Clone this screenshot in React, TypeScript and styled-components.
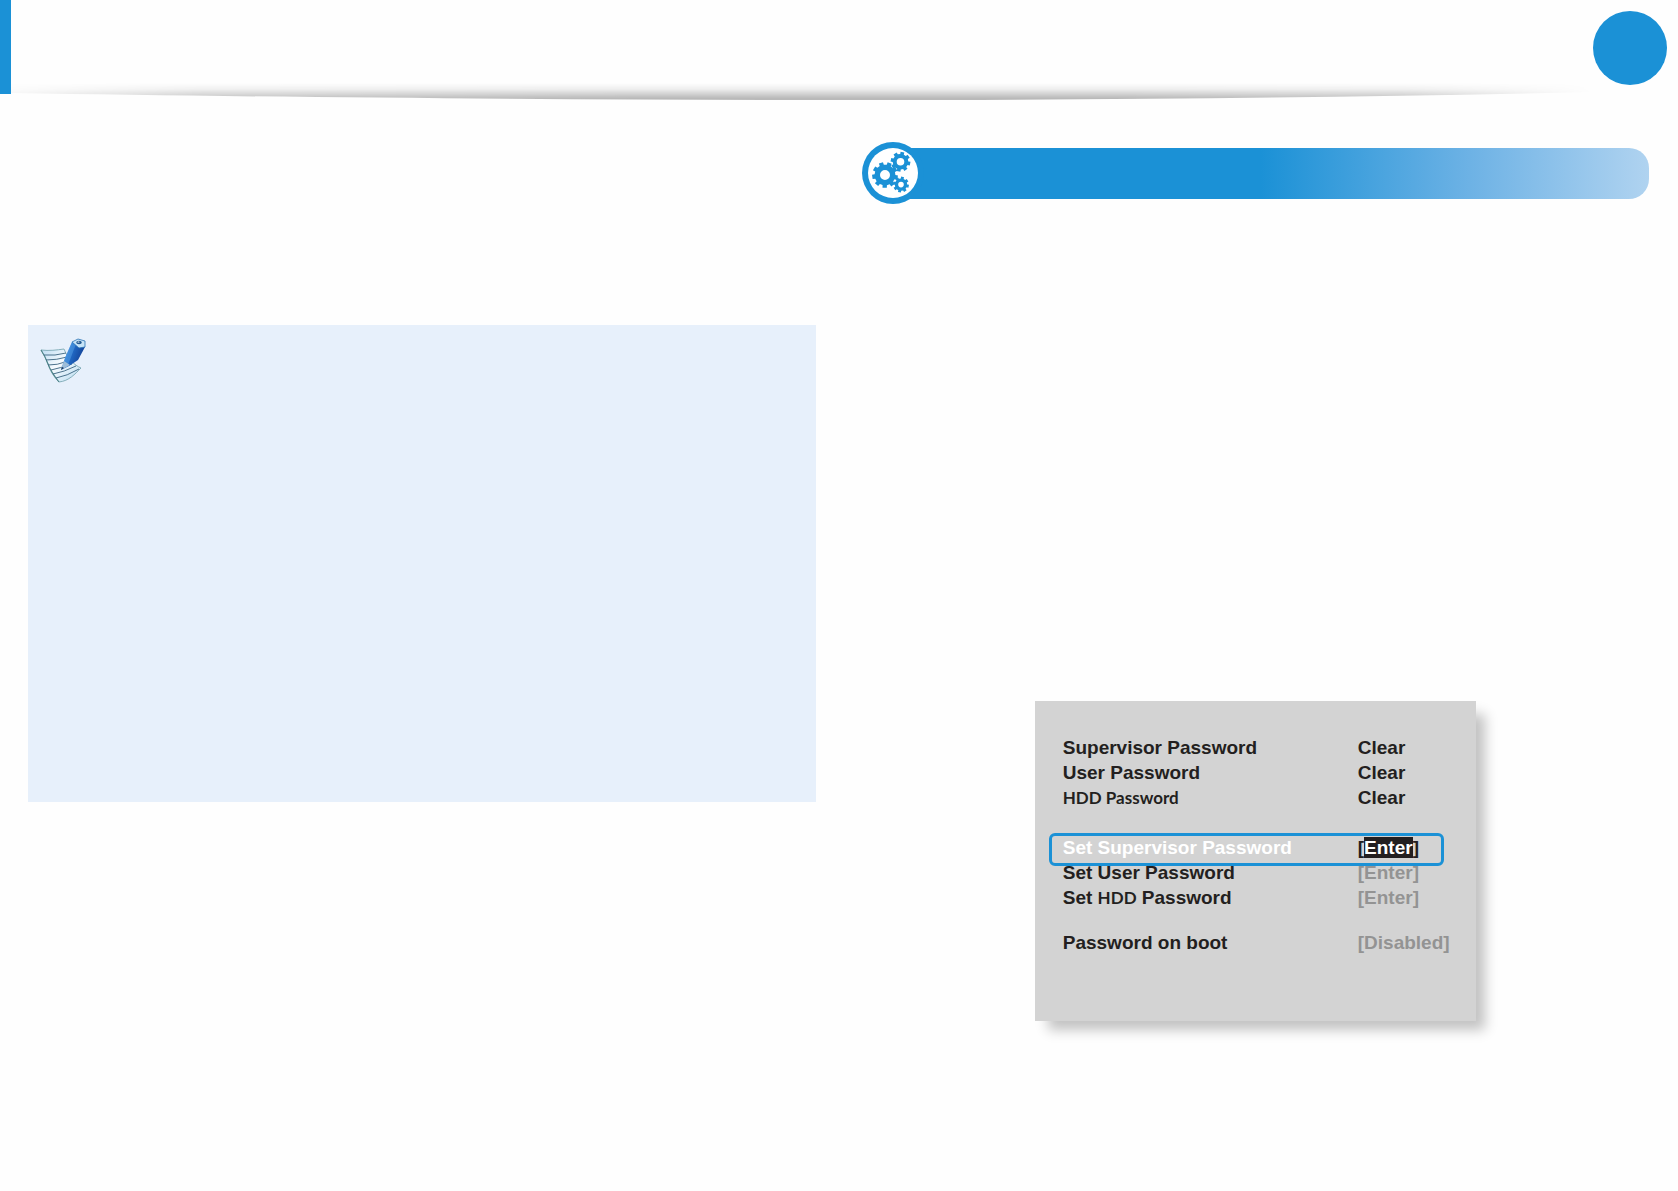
import React from "react";
import styled, { createGlobalStyle } from "styled-components";

const BLUE = "#1b91d6";
const INK = "#231f20";

const GlobalStyle = createGlobalStyle`
  * { box-sizing: border-box; }
  body {
    margin: 0;
    background: #fefefe;
    color: ${INK};
    font-family: "Liberation Sans", Arial, sans-serif;
  }
`;

const Page = styled.div`
  min-height: 100vh;
`;

const Header = styled.header`
  position: relative;
  display: flex;
  justify-content: space-between;
  height: 94px;
`;

const HeaderAccent = styled.div`
  width: 11px;
  background: ${BLUE};
`;

const PageNumberDisc = styled.div`
  width: 74px;
  height: 74px;
  margin: 11px 11px 0 0;
  border-radius: 50%;
  background: ${BLUE};
`;

const HeaderShadow = styled.svg`
  position: absolute;
  left: 11px;
  top: 82px;
  width: calc(100% - 96px);
  height: 20px;
  pointer-events: none;
`;

const Columns = styled.main`
  display: grid;
  grid-template-columns: 1fr 1fr;
  align-items: start;
  gap: 46px;
  padding: 48px 29px 48px 28px;
`;

const NoteBox = styled.aside`
  min-height: 477px;
  margin-top: 183px;
  padding: 13px 12px;
  background: #e7f0fb;
`;

const NoteIcon = styled.svg`
  display: block;
  width: 48px;
  height: 48px;
`;

const Section = styled.section`
  display: flex;
  flex-direction: column;
  align-items: center;
`;

const Banner = styled.div`
  display: flex;
  align-items: center;
  width: 100%;
  height: 62px;
`;

const BannerIcon = styled.svg`
  position: relative;
  flex: none;
  width: 62px;
  height: 62px;
`;

const BannerBar = styled.div`
  flex: 1;
  height: 51px;
  margin-left: -22px;
  border-radius: 0 20px 20px 0;
  background: linear-gradient(to right, ${BLUE} 48%, #6db2e5 76%, #b0d3f0 100%);
`;

const BiosScreen = styled.div`
  width: 441px;
  min-height: 320px;
  margin-top: 497px;
  padding: 34px 14px;
  background: #d3d3d3;
  box-shadow: 11px 11px 12px -2px rgba(0, 0, 0, 0.24);
`;

const Settings = styled.table`
  width: 100%;
  border-collapse: collapse;
  font-size: 19px;
  line-height: 25px;
  font-weight: 700;
  white-space: nowrap;
`;

const NameColumn = styled.col`
  width: 309px;
`;

const Row = styled.tr<{ $selected?: boolean }>`
  position: relative;
  color: ${(p) => (p.$selected ? "#ffffff" : INK)};
`;

const Spacer = styled.tbody<{ $height: number }>`
  height: ${(p) => p.$height}px;
`;

const Name = styled.th`
  height: 25px;
  padding: 0 0 0 14px;
  text-align: left;
  font-weight: 700;
`;

const Value = styled.td`
  height: 25px;
  padding: 0;
`;

const Narrow = styled.span`
  font-family: Lato, "Liberation Sans", sans-serif;
  font-size: 17px;
  line-height: 1;
`;

const ValueButton = styled.button<{ $selected?: boolean }>`
  display: block;
  padding: 0;
  border: 0;
  background: none;
  color: ${(p) => (p.$selected ? INK : "#939393")};
  font: inherit;
  cursor: pointer;
`;

const Highlight = styled.span`
  background: ${INK};
  color: #ffffff;
`;

const SelectionRing = styled.span`
  position: absolute;
  left: 0;
  top: -2px;
  width: 395px;
  height: 33px;
  border: 3px solid ${BLUE};
  border-radius: 6px;
  pointer-events: none;
`;

function gear(cx: number, cy: number, outer: number, inner: number, hole: number, teeth: number) {
  const step = (Math.PI * 2) / teeth;
  const at = (r: number, a: number) =>
    `${(cx + r * Math.cos(a)).toFixed(2)} ${(cy + r * Math.sin(a)).toFixed(2)}`;
  const points: string[] = [];
  for (let i = 0; i < teeth; i++) {
    const a = i * step + 0.2;
    points.push(at(inner, a - step * 0.3), at(outer, a - step * 0.24), at(outer, a + step * 0.24), at(inner, a + step * 0.3));
  }
  return (
    `M${points.join("L")}Z` +
    `M${cx - hole} ${cy}a${hole} ${hole} 0 1 0 ${hole * 2} 0a${hole} ${hole} 0 1 0 ${-hole * 2} 0Z`
  );
}

function GearsBadge() {
  return (
    <BannerIcon viewBox="0 0 62 62" aria-hidden="true">
      <circle cx="31" cy="31" r="31" fill={BLUE} />
      <circle cx="31" cy="31" r="25" fill="#fff" />
      <g fill={BLUE} fillRule="evenodd">
        <path d={gear(23, 33, 13, 10.4, 5, 9)} />
        <path d={gear(38.5, 19.7, 10, 7.8, 3.8, 8)} />
        <path d={gear(39, 42.6, 8, 6.2, 2.8, 8)} />
      </g>
    </BannerIcon>
  );
}

function NotePad() {
  return (
    <NoteIcon viewBox="0 0 48 48" aria-hidden="true">
      <defs>
        <linearGradient id="paper" x1="0" y1="0" x2="1" y2="1">
          <stop offset="0" stopColor="#bcdcf2" />
          <stop offset="0.45" stopColor="#f6fbfe" />
          <stop offset="1" stopColor="#b4d9ef" />
        </linearGradient>
        <linearGradient id="pen" x1="0" y1="0" x2="1" y2="0.4">
          <stop offset="0" stopColor="#5aa8ea" />
          <stop offset="0.45" stopColor="#2370cc" />
          <stop offset="1" stopColor="#123f94" />
        </linearGradient>
      </defs>
      <path d="M1 12C9 13 17 12 24 11C28 21 34 27 41 30C35 36 29 43 19 44C13 38 10 32 8 26Q5 18 1 12Z" fill="url(#paper)" stroke="#6f9fab" strokeWidth="0.8" />
      <path d="M1 12Q5 18 8 26T19 44" fill="none" stroke="#4e8488" strokeWidth="1.1" />
      <g fill="none" stroke="#3b6480" strokeWidth="0.9">
        <path d="M4 17Q15 18 26 15" />
        <path d="M6 22Q17 22 27 19" />
        <path d="M8 27Q18 27 25 24" />
        <path d="M11 32Q20 30 32 26" />
        <path d="M13 36Q24 34 36 28" />
        <path d="M16 40Q27 38 39 31" />
      </g>
      <path d="M21 32L25 20L32 4L45 9L38 22L29 28Z" fill="url(#pen)" />
      <path d="M25 20L32 4L36 6L28 27L21 32Z" fill="#5fa9e9" opacity="0.45" />
      <path d="M21 32L24 23L30 27Z" fill="#9dbdd8" />
      <path d="M21 32L22 29L24 30Z" fill="#173354" />
      <path d="M32 4L38 1L45 3V9L39 10Z" fill="#c7e4f7" stroke="#2a72b4" strokeWidth="0.8" />
      <ellipse cx="39" cy="4.5" rx="2.8" ry="1.7" fill="#235a91" />
      <ellipse cx="38.5" cy="4" rx="1.1" ry="0.6" fill="#ffffff" />
    </NoteIcon>
  );
}

function HeaderCurve() {
  return (
    <HeaderShadow viewBox="0 0 1582 20" preserveAspectRatio="none" aria-hidden="true">
      <defs>
        <linearGradient id="depth" gradientUnits="userSpaceOnUse" x1="0" y1="1" x2="0" y2="18">
          <stop offset="0" stopColor="#000" stopOpacity="0" />
          <stop offset="0.35" stopColor="#000" stopOpacity="0.06" />
          <stop offset="0.9" stopColor="#000" stopOpacity="0.27" />
          <stop offset="1" stopColor="#000" stopOpacity="0.27" />
        </linearGradient>
        <linearGradient id="fade" gradientUnits="userSpaceOnUse" x1="0" y1="0" x2="1582" y2="0">
          <stop offset="0" stopColor="#fff" stopOpacity="0.15" />
          <stop offset="0.12" stopColor="#fff" stopOpacity="0.85" />
          <stop offset="0.4" stopColor="#fff" />
          <stop offset="0.7" stopColor="#fff" />
          <stop offset="0.88" stopColor="#fff" stopOpacity="0.85" />
          <stop offset="1" stopColor="#fff" stopOpacity="0" />
        </linearGradient>
        <mask id="ends" maskUnits="userSpaceOnUse" x="0" y="0" width="1582" height="20">
          <rect width="1582" height="20" fill="url(#fade)" />
        </mask>
      </defs>
      <path d="M0 0H1582V10C1360 15 1120 18 860 18C540 18 250 15 0 11Z" fill="url(#depth)" mask="url(#ends)" />
    </HeaderShadow>
  );
}

export default function App() {
  return (
    <Page>
      <GlobalStyle />
      <Header>
        <HeaderAccent />
        <PageNumberDisc />
        <HeaderCurve />
      </Header>
      <Columns>
        <NoteBox>
          <NotePad />
        </NoteBox>
        <Section>
          <Banner>
            <GearsBadge />
            <BannerBar />
          </Banner>
          <BiosScreen>
            <Settings>
              <colgroup>
                <NameColumn />
                <col />
              </colgroup>
              <tbody>
                <Row>
                  <Name scope="row">Supervisor Password</Name>
                  <Value>Clear</Value>
                </Row>
                <Row>
                  <Name scope="row">User Password</Name>
                  <Value>Clear</Value>
                </Row>
                <Row>
                  <Name scope="row"><Narrow>HDD Password</Narrow></Name>
                  <Value>Clear</Value>
                </Row>
              </tbody>
              <Spacer $height={25}><tr><td colSpan={2} /></tr></Spacer>
              <tbody>
                <Row $selected>
                  <Name scope="row">
                    Set Supervisor Password
                    <SelectionRing />
                  </Name>
                  <Value>
                    <ValueButton type="button" $selected>[<Highlight>Enter</Highlight>]</ValueButton>
                  </Value>
                </Row>
                <Row>
                  <Name scope="row">Set User Password</Name>
                  <Value><ValueButton type="button">[Enter]</ValueButton></Value>
                </Row>
                <Row>
                  <Name scope="row">Set <Narrow>HDD</Narrow> Password</Name>
                  <Value><ValueButton type="button">[Enter]</ValueButton></Value>
                </Row>
              </tbody>
              <Spacer $height={20}><tr><td colSpan={2} /></tr></Spacer>
              <tbody>
                <Row>
                  <Name scope="row">Password on boot</Name>
                  <Value><ValueButton type="button">[Disabled]</ValueButton></Value>
                </Row>
              </tbody>
            </Settings>
          </BiosScreen>
        </Section>
      </Columns>
    </Page>
  );
}
